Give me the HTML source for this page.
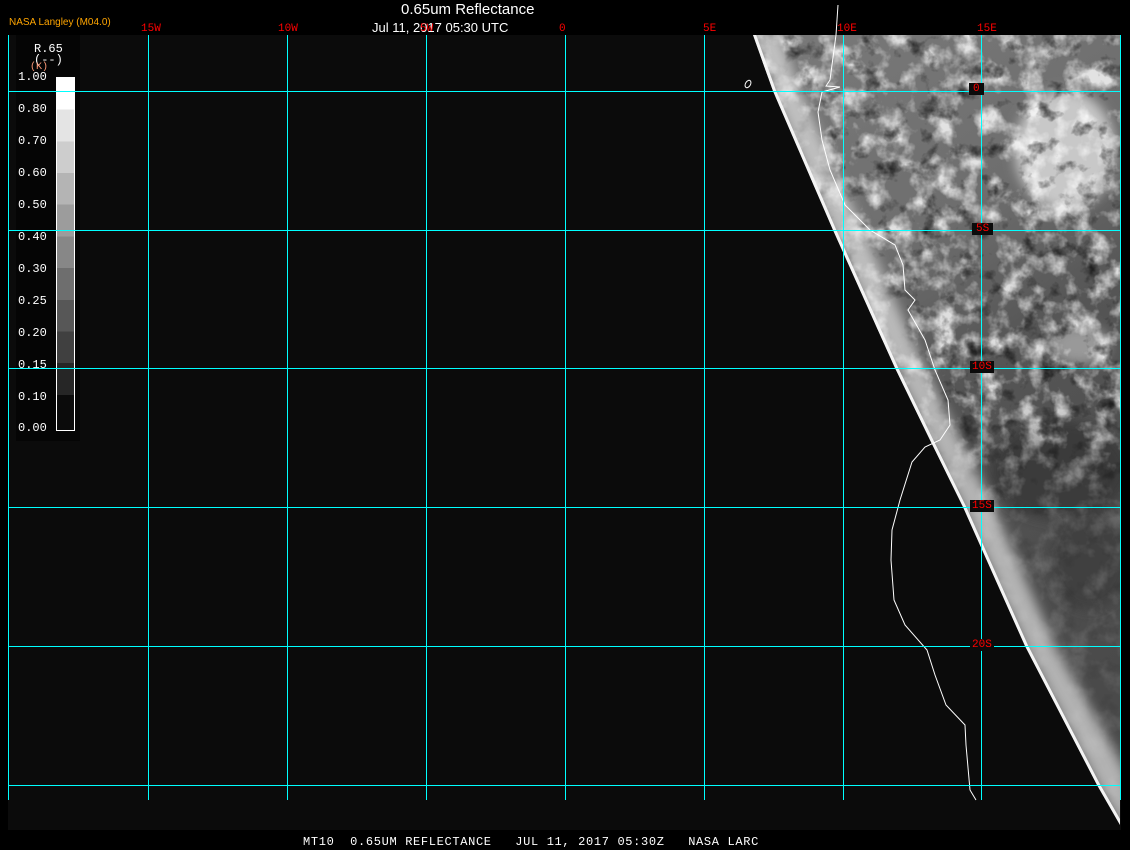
<!DOCTYPE html>
<html><head><style>
body{margin:0;background:#000;width:1130px;height:850px;overflow:hidden;position:relative;font-family:"Liberation Mono",monospace}
.t{position:absolute;white-space:pre}
.r{color:#f00;font-size:11px;font-family:"Liberation Mono",monospace;background:#0b0b0b;padding:0 2px}
.lg{position:absolute;left:18px;color:#fff;font-size:12px}
</style></head><body>
<div style="position:absolute;left:8px;top:35px;width:1113px;height:795px;background:#0b0b0b"></div>
<div style="position:absolute;left:16px;top:35px;width:64px;height:406px;background:#050505"></div>
<div style="position:absolute;left:56px;top:77px;width:17px;height:352px;border:1px solid #fff;background:linear-gradient(#fff 0 9%,#e4e4e4 9% 18%,#cdcdcd 18% 27%,#b4b4b4 27% 36%,#9c9c9c 36% 45%,#878787 45% 54%,#6e6e6e 54% 63%,#575757 63% 72%,#404040 72% 81%,#262626 81% 90%,#0b0b0b 90%)"></div>
<svg style="position:absolute;left:0;top:0" width="1130" height="850">
<defs>
<clipPath id="c"><polygon points="753,35 1120,35 1120,825 1097,785 1025,646 963,507 930,440 895,368 833,230 773,91"/></clipPath>
<linearGradient id="g" x1="0" y1="0" x2="0.3" y2="1">
<stop offset="0" stop-color="#7a7a7a"/><stop offset="0.35" stop-color="#6e6e6e"/><stop offset="0.55" stop-color="#555"/><stop offset="1" stop-color="#4a4a4a"/></linearGradient>
<linearGradient id="m" x1="0" y1="0" x2="0" y2="1"><stop offset="0" stop-color="#fff"/><stop offset="0.45" stop-color="#fff"/><stop offset="0.6" stop-color="#fff" stop-opacity="0.2"/><stop offset="1" stop-color="#fff" stop-opacity="0.1"/></linearGradient>
<mask id="mk"><rect x="740" y="35" width="390" height="800" fill="url(#m)"/></mask>
<filter id="w" x="0" y="0" width="100%" height="100%"><feTurbulence type="fractalNoise" baseFrequency="0.045" numOctaves="4" seed="3"/><feColorMatrix type="matrix" values="0 0 0 0 1  0 0 0 0 1  0 0 0 0 1  3 0 0 0 -1.35"/></filter>
<filter id="d" x="0" y="0" width="100%" height="100%"><feTurbulence type="fractalNoise" baseFrequency="0.05" numOctaves="4" seed="11"/><feColorMatrix type="matrix" values="0 0 0 0 0  0 0 0 0 0  0 0 0 0 0  -3 0 0 0 1.3"/></filter>
<filter id="b"><feGaussianBlur stdDeviation="6"/></filter>
</defs>
<g clip-path="url(#c)">
<rect x="740" y="35" width="390" height="800" fill="url(#g)"/>
<g filter="url(#b)">
<ellipse cx="1065" cy="150" rx="50" ry="60" fill="#c8c8c8"/><ellipse cx="1080" cy="345" rx="30" ry="20" fill="#999"/>
<ellipse cx="1060" cy="470" rx="70" ry="50" fill="#3a3a3a"/><ellipse cx="1090" cy="560" rx="40" ry="50" fill="#404040"/>
</g>
<g mask="url(#mk)">
<rect x="740" y="35" width="390" height="800" filter="url(#w)" opacity="0.8"/>
<rect x="740" y="35" width="390" height="800" filter="url(#d)" opacity="0.7"/>
</g>
<polygon points="753,35 773,91 833,230 895,368 930,440 963,507 1025,646 1097,785 1120,825 1135,825 1125,770 1055,646 993,507 960,440 925,368 863,230 800,91 780,35" fill="#e0e0e0" opacity="0.7" filter="url(#b)"/>
<polyline points="753,35 773,91 833,230 895,368 930,440 963,507 1025,646 1097,785 1120,825" fill="none" stroke="#f4f4f4" stroke-width="6"/>
</g>
<polyline points="838,5 836,35 830,80 826,86 840,87 822,92 818,112 822,140 830,170 845,205 870,230 895,245 903,265 905,290 915,300 908,310 925,340 935,370 948,400 950,425 940,440 925,447 912,462 900,500 892,530 891,560 894,600 905,625 927,650 935,675 946,705 965,725 966,745 970,790 976,800" fill="none" stroke="#fff" stroke-width="1"/>
<ellipse cx="748" cy="84" rx="2.5" ry="4" transform="rotate(30 748 84)" fill="none" stroke="#fff"/>
<g stroke="#0ff" stroke-width="1">
<line x1="8.5" y1="35" x2="8.5" y2="800"/><line x1="148.5" y1="35" x2="148.5" y2="800"/><line x1="287.5" y1="35" x2="287.5" y2="800"/><line x1="426.5" y1="35" x2="426.5" y2="800"/><line x1="565.5" y1="35" x2="565.5" y2="800"/><line x1="704.5" y1="35" x2="704.5" y2="800"/><line x1="843.5" y1="35" x2="843.5" y2="800"/><line x1="981.5" y1="35" x2="981.5" y2="800"/><line x1="1120.5" y1="35" x2="1120.5" y2="800"/>
<line x1="8" y1="91.5" x2="1120" y2="91.5"/><line x1="8" y1="230.5" x2="1120" y2="230.5"/><line x1="8" y1="368.5" x2="1120" y2="368.5"/><line x1="8" y1="507.5" x2="1120" y2="507.5"/><line x1="8" y1="646.5" x2="1120" y2="646.5"/><line x1="8" y1="785.5" x2="1120" y2="785.5"/></g>
</svg>
<div class="t" style="left:401px;top:1px;color:#fff;font:15px 'Liberation Sans',sans-serif">0.65um Reflectance</div>
<div class="t" style="left:9px;top:17px;color:#ffa500;font:10px 'Liberation Sans',sans-serif">NASA Langley (M04.0)</div>
<div class="t" style="left:372px;top:20px;color:#fff;font:13px 'Liberation Sans',sans-serif">Jul 11, 2017 05:30 UTC</div>
<div class="t" style="left:141px;top:23px;color:#f00;font-size:11px">15W</div><div class="t" style="left:278px;top:23px;color:#f00;font-size:11px">10W</div><div class="t" style="left:420px;top:23px;color:#f00;font-size:11px">5W</div><div class="t" style="left:559px;top:23px;color:#f00;font-size:11px">0</div><div class="t" style="left:703px;top:23px;color:#f00;font-size:11px">5E</div><div class="t" style="left:837px;top:23px;color:#f00;font-size:11px">10E</div><div class="t" style="left:977px;top:23px;color:#f00;font-size:11px">15E</div>
<div class="t r" style="left:969px;top:83px;padding:0 4px">0</div><div class="t r" style="left:972px;top:223px;padding:0 4px">5S</div><div class="t r" style="left:970px;top:361px">10S</div><div class="t r" style="left:970px;top:500px">15S</div><div class="t r" style="left:970px;top:639px">20S</div>
<div class="t" style="left:34px;top:42px;color:#fff;font-size:12px">R.65</div>
<div class="t" style="left:34px;top:53px;color:#fff;font-size:12px">(--)</div>
<div class="t" style="left:30px;top:62px;color:#f97;font-size:10px">(K)</div>
<div class="lg" style="top:70px">1.00</div><div class="lg" style="top:102px">0.80</div><div class="lg" style="top:134px">0.70</div><div class="lg" style="top:166px">0.60</div><div class="lg" style="top:198px">0.50</div><div class="lg" style="top:230px">0.40</div><div class="lg" style="top:262px">0.30</div><div class="lg" style="top:294px">0.25</div><div class="lg" style="top:326px">0.20</div><div class="lg" style="top:358px">0.15</div><div class="lg" style="top:390px">0.10</div><div class="lg" style="top:421px">0.00</div>
<div style="position:absolute;left:0;top:830px;width:1130px;height:20px;background:#000"></div>
<div class="t" style="left:303px;top:835px;color:#fff;font-size:12px;letter-spacing:0.66px">MT10  0.65UM REFLECTANCE   JUL 11, 2017 05:30Z   NASA LARC</div>
</body></html>
